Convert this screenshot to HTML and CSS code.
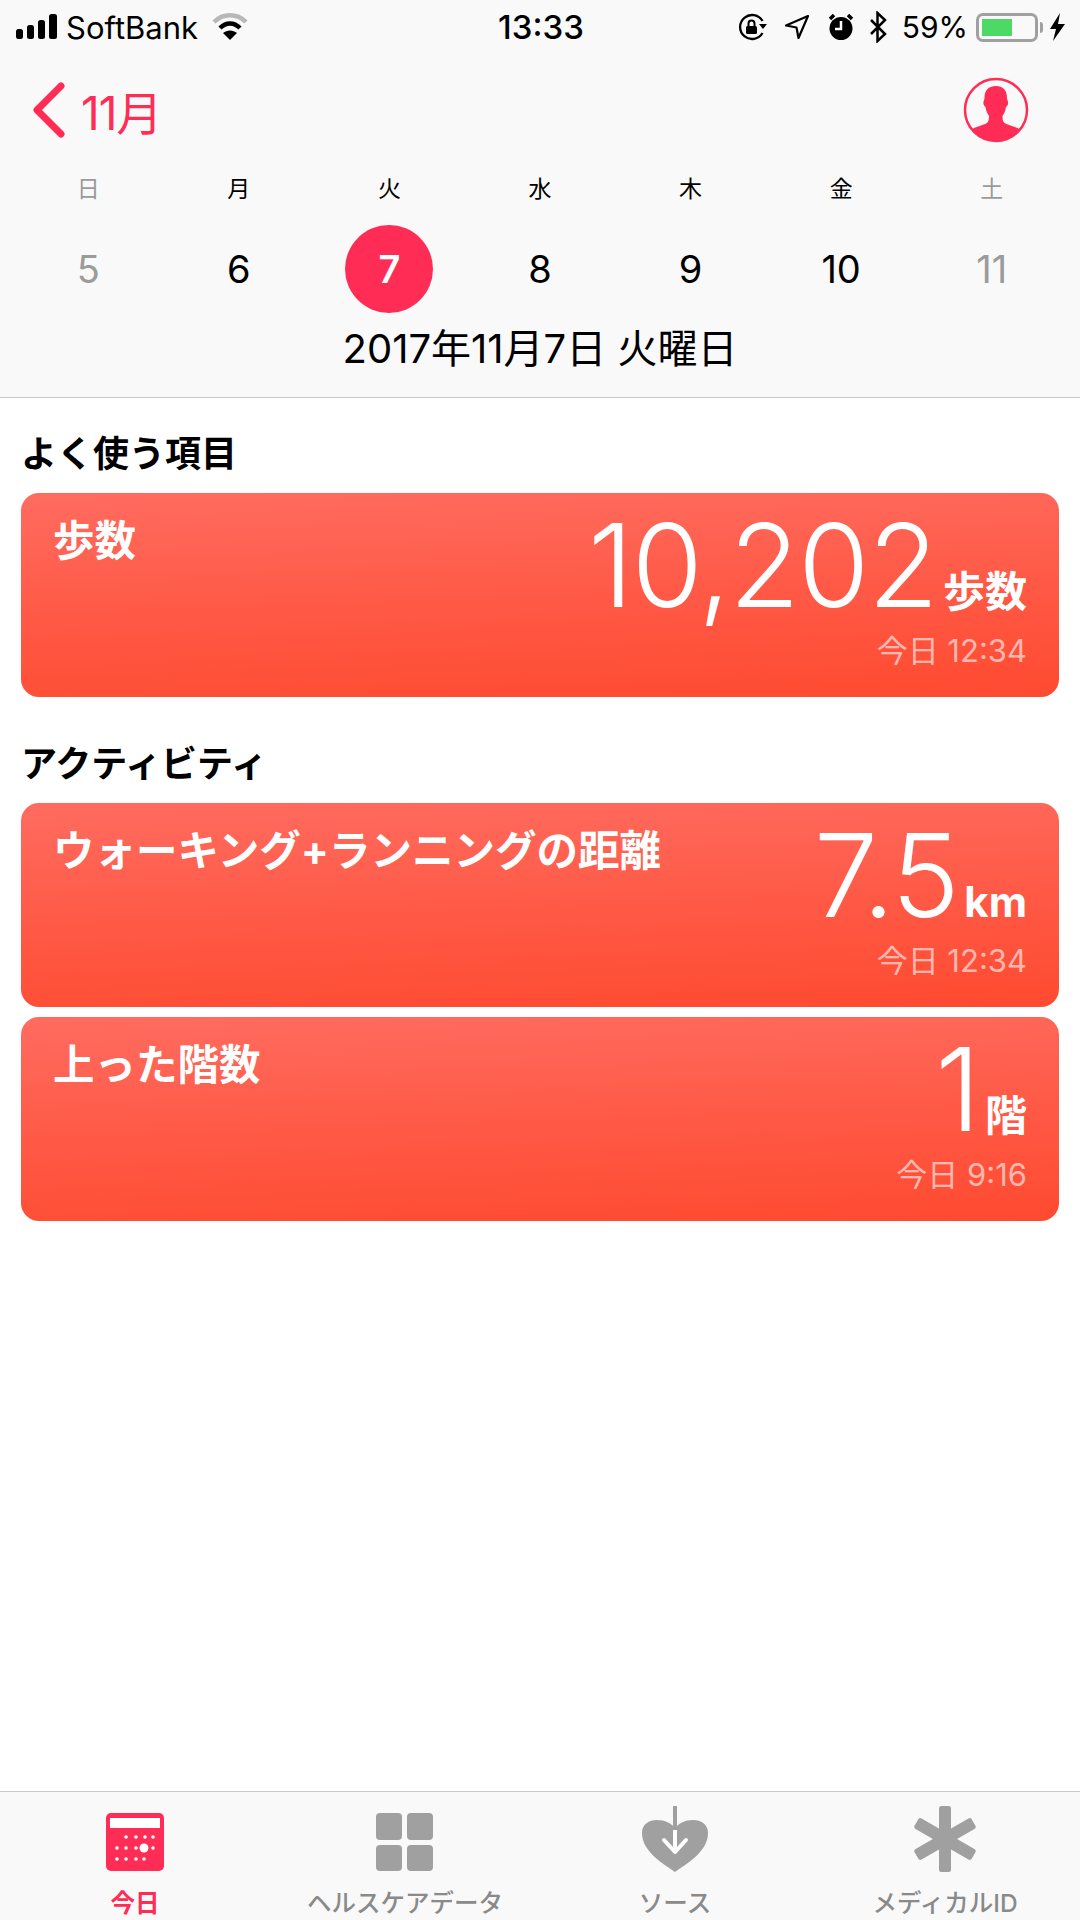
FILE: index.html
```html
<!DOCTYPE html>
<html lang="ja">
<head>
<meta charset="utf-8">
<title>ヘルスケア</title>
<link rel="stylesheet" href="styles.css">
</head>
<body>
<div class="app">
  <header class="top">
    <div class="status">
      <div class="status-left">
        <svg class="signal" width="42" height="26" viewBox="0 0 42 26"><rect x="0" y="15" width="7" height="10" rx="2.5"/><rect x="11" y="11" width="7" height="14" rx="2.5"/><rect x="22" y="6" width="7" height="19" rx="2.5"/><rect x="33" y="0" width="8" height="25" rx="2.5"/></svg>
        <span class="carrier">SoftBank</span>
        <svg class="wifi" width="36" height="28" viewBox="0 0 36 28"><path d="M2 9C11 0 25 0 34 9" fill="none" stroke="#b8b8b8" stroke-width="4.5"/><path d="M8 15C14 9 22 9 28 15" fill="none" stroke="#000" stroke-width="4.5"/><path d="M18 27l-7-7c4-3.500 10-3.500 14 0z"/></svg>
      </div>
      <div class="clock">13:33</div>
      <div class="status-right">
        <svg width="30" height="28" viewBox="0 0 30 28"><path d="M24.500 8A12 12 0 1 0 24.500 20" fill="none" stroke="#000" stroke-width="2.300"/><path d="M21 11h8l-4 5z"/><rect x="8" y="13" width="11" height="8" rx="1.500"/><path d="M10.500 13V10.500a3 3 0 0 1 6 0V13" fill="none" stroke="#000" stroke-width="2"/></svg>
        <svg class="ic-loc" width="26" height="26" viewBox="0 0 26 26"><path d="M24 2L2 11.500l10.500 2 2 10.500z" fill="none" stroke="#000" stroke-width="2.200" stroke-linejoin="round"/></svg>
        <svg class="ic-alarm" width="26" height="28" viewBox="0 0 26 28"><circle cx="13" cy="15.500" r="11.500"/><path d="M2 6l4-4M24 6l-4-4" stroke="#000" stroke-width="3.500"/><path d="M13 8v8H7" fill="none" stroke="#fff" stroke-width="2.500"/></svg>
        <svg class="ic-bt" width="18" height="32" viewBox="0 0 18 32"><path d="M2 9l14 14-7.500 7V2L16 9 2 23" fill="none" stroke="#000" stroke-width="2.500"/></svg>
        <span class="percent">59%</span>
        <span class="battery"><span class="battery-fill"></span></span>
        <span class="battery-cap"></span>
        <svg class="ic-bolt" width="16" height="28" viewBox="0 0 16 28"><path d="M10 0L0 16h6L3 28l12-17H8z"/></svg>
      </div>
    </div>
    <div class="nav">
      <div class="back">
        <svg width="34" height="56" viewBox="0 0 34 56"><path d="M29 4L5 28l24 24" fill="none" stroke="#ff2d55" stroke-width="7" stroke-linecap="round" stroke-linejoin="round"/></svg>
        <span class="back-label">11月</span>
      </div>
      <svg class="avatar" width="66" height="66" viewBox="0 0 66 66"><defs><clipPath id="avatar-clip"><circle cx="33" cy="33" r="31"/></clipPath></defs><circle cx="33" cy="33" r="31" fill="none" stroke="#ff2d55" stroke-width="2.500"/><path clip-path="url(#avatar-clip)" d="M33 9c8 0 11 5 11 12 0 2 1.500 3 1 6-.5 2-1.500 2.500-2 3-.5 4-2 7-3.500 9 0 5 1 7 4 8l11 4 8 5v14H3V56l8-5 11-4c3-1 4-3 4-8-1.500-2-3-5-3.500-9-.5-.5-1.500-1-2-3-.5-3 1-4 1-6 0-7 3-12 11.500-12z" fill="#ff2d55"/></svg>
    </div>
    <div class="week-labels">
      <span class="muted">日</span><span>月</span><span>火</span><span>水</span><span>木</span><span>金</span><span class="muted">土</span>
    </div>
    <div class="week-days">
      <span class="muted">5</span><span>6</span><span class="today">7</span><span>8</span><span>9</span><span>10</span><span class="muted">11</span>
    </div>
    <div class="date-title">2017年11月7日 火曜日</div>
  </header>

  <main class="content">
    <section class="group">
      <h2 class="group-title">よく使う項目</h2>
      <article class="card">
        <div class="card-name">歩数</div>
        <div class="card-right">
          <div class="card-value"><span class="num">10,202</span><span class="unit">歩数</span></div>
          <div class="card-time">今日 12:34</div>
        </div>
      </article>
    </section>
    <section class="group">
      <h2 class="group-title">アクティビティ</h2>
      <article class="card">
        <div class="card-name">ウォーキング+ランニングの距離</div>
        <div class="card-right">
          <div class="card-value"><span class="num">7.5</span><span class="unit">km</span></div>
          <div class="card-time">今日 12:34</div>
        </div>
      </article>
      <article class="card">
        <div class="card-name">上った階数</div>
        <div class="card-right">
          <div class="card-value"><span class="num">1</span><span class="unit">階</span></div>
          <div class="card-time">今日 9:16</div>
        </div>
      </article>
    </section>
  </main>

  <nav class="tabs">
    <div class="tab active">
      <svg width="58" height="58" viewBox="0 0 58 58"><rect width="58" height="58" rx="5" fill="#ff2d55"/><rect x="4" y="5" width="50" height="10" fill="#fff"/><g fill="#fff"><circle cx="20" cy="24" r="1.800"/><circle cx="30" cy="24" r="1.800"/><circle cx="39" cy="24" r="1.800"/><circle cx="47" cy="24" r="1.800"/><circle cx="11" cy="35" r="1.800"/><circle cx="20" cy="35" r="1.800"/><circle cx="30" cy="35" r="1.800"/><circle cx="38" cy="35" r="4.500"/><circle cx="47" cy="35" r="1.800"/><circle cx="11" cy="46" r="1.800"/><circle cx="20" cy="46" r="1.800"/><circle cx="30" cy="46" r="1.800"/><circle cx="38" cy="46" r="1.800"/></g></svg>
      <span class="tab-label">今日</span>
    </div>
    <div class="tab">
      <svg width="58" height="58" viewBox="0 0 58 58" fill="#a0a0a0"><rect x="0" y="0" width="26" height="27" rx="4"/><rect x="31" y="0" width="26" height="27" rx="4"/><rect x="0" y="32" width="26" height="26" rx="4"/><rect x="31" y="32" width="26" height="26" rx="4"/></svg>
      <span class="tab-label">ヘルスケアデータ</span>
    </div>
    <div class="tab">
      <svg width="66" height="66" viewBox="0 0 66 66" class="ic-source"><path d="M33 66C22 58 0 46 0 27 0 18 7 14 15 14c8 0 14 3 18 8 4-5 10-8 18-8 8 0 15 4 15 13 0 19-22 31-33 39z" fill="#a0a0a0"/><path d="M33 20v27" stroke="#fff" stroke-width="4" fill="none"/><path d="M33 0v24" stroke="#a0a0a0" stroke-width="4" fill="none"/><path d="M22 34l11 12 11-12" fill="none" stroke="#fff" stroke-width="4" stroke-linecap="round" stroke-linejoin="round"/></svg>
      <span class="tab-label">ソース</span>
    </div>
    <div class="tab">
      <svg width="62" height="66" viewBox="0 0 62 66" class="ic-star"><g fill="#a0a0a0"><rect x="25" y="0" width="12" height="66" rx="2.500"/><rect x="-2" y="27" width="66" height="12" rx="2.500" transform="rotate(30 31 33)"/><rect x="-2" y="27" width="66" height="12" rx="2.500" transform="rotate(-30 31 33)"/></g></svg>
      <span class="tab-label">メディカルID</span>
    </div>
  </nav>
</div>
</body>
</html>
```

FILE: styles.css
```css
* { box-sizing: border-box; }
html, body { margin: 0; padding: 0; }
body {
  width: 1080px;
  height: 1920px;
  background: #fff;
  font-family: Inter, "Noto Sans CJK JP", sans-serif;
  color: #000;
  overflow: hidden;
}
.app { width: 1080px; height: 1920px; display: flex; flex-direction: column; }

.top { height: 398px; background: #f9f9f9; border-bottom: 1px solid #c8c8c8; flex: none; }

.status { height: 54px; padding: 0 14px 0 16px; display: flex; align-items: center; justify-content: space-between; }
.status-left { display: flex; align-items: center; width: 330px; }
.carrier { font-size: 31px; margin-left: 8px; }
.wifi { margin-left: 14px; }
.clock { font-size: 33px; font-weight: 500; }
.status-right { display: flex; align-items: center; width: 330px; justify-content: flex-end; }
.ic-loc { margin-left: 16px; }
.ic-alarm { margin-left: 18px; }
.ic-bt { margin-left: 15px; }
.percent { font-size: 30px; margin-left: 15px; }
.battery { width: 62px; height: 29px; border: 3px solid #a0a0a0; border-radius: 7px; padding: 3px; margin-left: 8px; display: block; }
.battery-fill { display: block; width: 30px; height: 100%; background: #4cd964; }
.battery-cap { width: 3px; height: 11px; background: #a0a0a0; border-radius: 0 3px 3px 0; margin-left: 2px; }
.ic-bolt { margin-left: 7px; }

.nav { height: 112px; padding: 0 51px 0 32px; display: flex; align-items: center; justify-content: space-between; }
.back { display: flex; align-items: center; }
.back-label { font-size: 46px; color: #ff2d55; margin-left: 15px; letter-spacing: -1px; }

.week-labels, .week-days { display: grid; grid-template-columns: repeat(7, 1fr); padding: 0 13px; text-align: center; justify-items: center; align-items: center; }
.week-labels { height: 38px; font-size: 23px; margin-top: 2px; }
.week-days { height: 90px; font-size: 38px; margin-top: 18px; }
.muted { color: #9b9b9b; }
.today { width: 88px; height: 88px; border-radius: 50%; background: #ff2d55; color: #fff; font-weight: 600; display: flex; align-items: center; justify-content: center; }
.date-title { text-align: center; font-size: 40px; line-height: 48px; margin-top: 11px; }

.content { flex: 1; padding: 0 21px; }
.group { display: flex; flex-direction: column; gap: 10px; margin-bottom: 11px; }
.group-title { margin: 31px 0 4px; font-size: 36px; line-height: 50px; font-weight: 700; }
.card { height: 204px; border-radius: 18px; background: linear-gradient(178deg, #ff6c5f 0%, #ff5a47 50%, #ff4a30 100%); color: #fff; padding: 22px 32px 20px; display: flex; justify-content: space-between; }
.card-name { font-size: 41.5px; font-weight: 700; line-height: 52px; }
.card-right { display: flex; flex-direction: column; align-items: flex-end; margin-top: 0; }
.card-value { display: flex; align-items: baseline; margin-top: -10px; line-height: 122px; height: 122px; }
.num { font-size: 115px; font-weight: 300; letter-spacing: -1.500px; }
.unit { font-size: 42px; font-weight: 700; margin-left: 6px; }
.card-time { font-size: 31px; color: rgba(255,255,255,0.6); line-height: 40px; margin-top: 4px; }

.tabs { height: 129px; flex: none; background: #f9f9f9; border-top: 1px solid #c8c8c8; display: grid; grid-template-columns: repeat(4, 1fr); }
.tab { display: flex; flex-direction: column; align-items: center; color: #8a8a8a; }
.tab svg { margin-top: 21px; height: 58px; flex: none; }
.tab .ic-source, .tab .ic-star { margin-top: 14px; height: 66px; }
.tab-label { font-size: 24.5px; font-weight: 500; line-height: 32px; margin-top: 16px; white-space: nowrap; }
.tab .ic-source + .tab-label, .tab .ic-star + .tab-label { margin-top: 15px; }
.tab.active { color: #ff2d55; }
.tab.active .tab-label { font-weight: 700; }
```
